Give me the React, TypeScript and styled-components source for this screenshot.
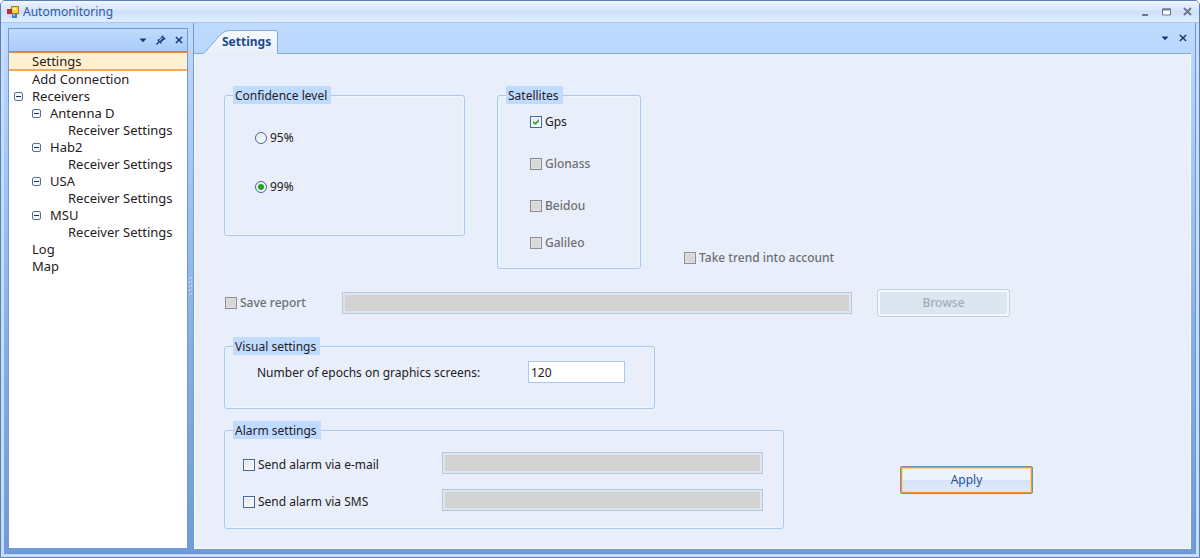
import React, { useState } from "react";
import styled, { createGlobalStyle, css } from "styled-components";

const GlobalStyle = createGlobalStyle`
  *, *::before, *::after { box-sizing: border-box; }
  body { margin: 0; }
  button, input { font: inherit; color: inherit; }
`;

const navy = "#1e4a8f";
const ink = "#1f2022";
const surface = "#e8effa";
const line = "#a9c8f0";

const Window = styled.div`
  display: flex;
  flex-direction: column;
  min-height: 100vh;
  border: 1px solid #5a7fb4;
  border-radius: 5px 5px 0 0;
  background: #c6ddfb;
  color: ${ink};
  font: 12px/18px "Noto Sans", "Open Sans", sans-serif;
`;

const TitleBar = styled.header`
  display: flex;
  align-items: center;
  height: 22px;
  padding: 0 6px;
  gap: 4px;
  border-bottom: 1px solid #aac8f2;
  border-radius: 4px 4px 0 0;
  background: linear-gradient(#f4f9ff 0, #e3edfd 3px, #dbe7fc 9px, #cddffb 10px, #dfecff 20px);
`;

const Title = styled.h1`
  flex: 1;
  margin: 0;
  color: #2d5aa6;
  font-size: 12px;
  font-weight: 400;
`;

const Tools = styled.div<{ $gap?: number }>`
  display: flex;
  align-items: center;
  gap: ${(p) => p.$gap ?? 6}px;
`;

const ToolButton = styled.button<{ $tone?: string }>`
  display: grid;
  place-items: center;
  width: 12px;
  height: 16px;
  padding: 0;
  border: 0;
  background: none;
  color: ${(p) => p.$tone ?? "#16367c"};
`;

const Workspace = styled.div`
  flex: 1;
  display: flex;
  margin: 0 3px 3px;
  padding: 0 4px 4px;
  border: solid #6b95d2;
  border-width: 0 1px 1px 0;
  background: linear-gradient(#bfdbff, #a6c8f6 25%, #87aee6 60%, #6f9bd6);
`;

const SidePanel = styled.aside`
  display: flex;
  flex-direction: column;
  flex: 0 0 180px;
  margin-top: 5px;
  border: 1px solid #6f9ad6;
  background: #fff;
`;

const PanelHeader = styled.div`
  display: flex;
  justify-content: flex-end;
  height: 23px;
  padding: 0 2px;
  border-bottom: 1px solid #6f9ad6;
  background: linear-gradient(#c0daff, #aaccf7);
`;

const TreeList = styled.ul<{ $nested?: boolean }>`
  margin: 0;
  padding: 0 0 0 ${(p) => (p.$nested ? 18 : 0)}px;
  list-style: none;
`;

const TreeRow = styled.div<{ $selected?: boolean }>`
  display: flex;
  align-items: center;
  height: 17px;
  padding-left: 5px;
  gap: 9px;
  ${(p) =>
    p.$selected &&
    css`
      height: 19px;
      border-top: 1px solid #e58a3a;
      border-bottom: 2px solid #f9a95a;
      background: #fff0d2;
    `}
`;

const TreeLabel = styled.button<{ $leaf?: boolean }>`
  padding: 0;
  margin-left: ${(p) => (p.$leaf ? 18 : 0)}px;
  border: 0;
  background: none;
  font-size: 13px;
  line-height: 17px;
  text-align: left;
`;

const Expander = styled.button`
  position: relative;
  width: 9px;
  height: 9px;
  padding: 0;
  border: 1px solid #5b6f93;
  border-radius: 2px;
  background: #f6f9fe;
  &::after {
    content: "";
    position: absolute;
    inset: 3px 1px auto;
    height: 1px;
    background: #1b2d55;
  }
`;

const Splitter = styled.div`
  display: flex;
  align-items: center;
  justify-content: center;
  width: 6px;
  border-right: 1px solid #6f9ad6;
`;

const MainPanel = styled.main`
  flex: 1;
  min-width: 0;
  display: flex;
  flex-direction: column;
`;

const TabStrip = styled.div`
  display: flex;
  justify-content: space-between;
  align-items: center;
  height: 31px;
  padding: 0 2px 0 9px;
  border-bottom: 1px solid #7fa9e0;
`;

const Tab = styled.button`
  position: relative;
  align-self: flex-end;
  width: 76px;
  height: 24px;
  margin-bottom: -1px;
  padding: 0 7px 0 19px;
  border: 0;
  background: none;
  color: ${navy};
  font-size: 12px;
  font-weight: 700;
  line-height: 24px;
  text-align: left;
`;

const TabShape = styled.svg`
  position: absolute;
  inset: 0;
`;

const TabText = styled.span`
  position: relative;
`;

const Page = styled.form`
  flex: 1;
  display: flex;
  flex-direction: column;
  gap: 20px;
  padding: 32px 29px 19px;
  border: solid #f7faff;
  border-width: 0 1px 1px;
  background: ${surface};
`;

const Row = styled.div<{ $align?: string; $gap?: number }>`
  display: flex;
  align-items: ${(p) => p.$align ?? "center"};
  gap: ${(p) => p.$gap ?? 0}px;
`;

const Stack = styled.div<{ $gap: number }>`
  display: flex;
  flex-direction: column;
  gap: ${(p) => p.$gap}px;
`;

const Group = styled.fieldset<{ $width: number }>`
  flex: none;
  width: ${(p) => p.$width}px;
  min-width: 0;
  margin: 0;
  padding: 0 0 0 8px;
  border: 1px solid ${line};
  border-radius: 3px;
  box-shadow: inset 0 0 0 1px #eff5fd;
`;

const Legend = styled.legend`
  height: 18px;
  padding: 0 4px 0 2px;
  background: #bfdbff;
  line-height: 19px;
`;

const RadioList = styled.div`
  display: flex;
  flex-direction: column;
  gap: 31px;
  padding: 25px 22px 39px;
`;

const SatelliteList = styled.div`
  display: grid;
  grid-template-rows: 42px 42px 37px 18px;
  align-items: start;
  padding: 9px 24px 16px;
`;

const Option = styled.label<{ $disabled?: boolean }>`
  display: flex;
  align-items: center;
  gap: 3px;
  height: 18px;
  white-space: nowrap;
  ${(p) =>
    p.$disabled &&
    css`
      color: #6e7073;
      font-weight: 500;
    `}
`;

const Box = styled.input`
  appearance: none;
  position: relative;
  flex: none;
  width: 12px;
  height: 12px;
  margin: 0;
  border: 1px solid #40699c;
  background: linear-gradient(135deg, #dfe3ea, #fbfcfe);
  box-shadow: inset 0 0 0 1px #f6f8fb;
  &[type="radio"] {
    border-radius: 50%;
  }
  &[type="radio"]:checked::after {
    content: "";
    position: absolute;
    inset: 2px;
    border-radius: 50%;
    background: #1fa51f;
  }
  &[type="checkbox"]:checked::after {
    content: "";
    position: absolute;
    inset: 2px;
    background: #2ba32b;
    clip-path: polygon(0 35%, 38% 62%, 100% 0, 100% 38%, 42% 100%, 0 68%);
  }
  &:disabled {
    border-color: #8d8d8d;
    background: #d8d8d8;
    box-shadow: inset 0 0 0 1px #e0e0e0;
  }
`;

const TrendSlot = styled.div`
  padding: 0 0 2px 43px;
`;

const SaveLabel = styled.div`
  flex: 0 0 118px;
  padding-left: 1px;
`;

const TextField = styled.input<{ $width: number }>`
  flex: 0 1 ${(p) => p.$width}px;
  min-width: 0;
  width: ${(p) => p.$width}px;
  height: 22px;
  padding: 0 2px;
  border: 1px solid ${line};
  border-radius: 0;
  background: #fff;
  &:disabled {
    border-color: #b9c8d8;
    background: #d3d3d3;
    box-shadow: inset 0 0 0 2px #dce6f1;
  }
`;

const BrowseButton = styled.button`
  width: 133px;
  height: 28px;
  margin-left: 25px;
  border: 1px solid #c2cfdc;
  border-radius: 3px;
  background: #dce6f0;
  box-shadow: inset 0 0 0 2px #f3f8fd;
  color: #a2adb9;
  font-weight: 500;
`;

const ApplyButton = styled.button`
  width: 133px;
  height: 28px;
  margin: 10px 0 0 116px;
  border: 1px solid #7c91b0;
  border-radius: 2px;
  background: linear-gradient(#eef4fd 0 13px, #d3e2f6 13px, #e3edfb);
  box-shadow: inset 0 0 0 1px #eb962f, inset 0 0 0 2px #fdd9a2;
  color: #27509a;
`;

const EpochRow = styled.div`
  display: flex;
  align-items: center;
  padding: 6px 29px 25px 24px;
`;

const EpochLabel = styled.label`
  flex: 0 0 271px;
  padding-top: 2px;
`;

const AlarmRows = styled.div`
  display: flex;
  flex-direction: column;
  gap: 15px;
  padding: 13px 20px 17px 10px;
`;

const AlarmOption = styled.div`
  flex: 0 0 199px;
  padding-top: 3px;
`;

const Dropdown = () => (
  <svg width="8" height="5" viewBox="0 0 8 5" aria-hidden="true">
    <path d="M.5 .5h7L4 4.200z" fill="currentColor" />
  </svg>
);

const Cross = ({ size = 9, weight = 1.6 }: { size?: number; weight?: number }) => (
  <svg width={size} height={size} viewBox="0 0 9 9" aria-hidden="true">
    <path d="M1 1l7 7M8 1L1 8" stroke="currentColor" strokeWidth={weight} />
  </svg>
);

const Pin = () => (
  <svg width="10" height="10" viewBox="0 0 10 10" fill="none" stroke="currentColor" aria-hidden="true">
    <path d="M.5 9.500L3.200 6.800" strokeWidth="1.300" />
    <path d="M1.600 4.600l3.800 3.800" strokeWidth="1.300" />
    <path d="M5.700 .8l3.500 3.500" strokeWidth="1.300" />
    <path d="M2.800 5.200L6.200 1.600M5 7.200L8.500 3.700" />
    <path d="M4.400 6.400L7.600 3.200" strokeWidth="1.400" />
  </svg>
);

const AppIcon = () => (
  <svg width="12" height="12" viewBox="0 0 12 12" aria-hidden="true">
    <rect x="4.5" y=".5" width="7" height="7" fill="#fcd33b" stroke="#a67c18" />
    <rect x="6" y="2" width="3" height="2" fill="#fff3b4" />
    <rect x=".5" y="3.5" width="4" height="4" fill="#d2281c" stroke="#a23a35" />
    <rect x="1" y="8.5" width="3" height="2" fill="#e6e9f0" stroke="#c1c9d9" strokeWidth=".6" />
    <rect x="5" y="8" width="5" height="4" fill="#3f79dc" />
    <rect x="6" y="8" width="2" height="2" fill="#8fb8f6" />
  </svg>
);

const Grip = () => (
  <svg width="4" height="18" viewBox="0 0 4 18" aria-hidden="true">
    {[0, 4, 8, 12, 16].map((y) => (
      <g key={y}>
        <rect x="2" y={y} width="1" height="1" fill="#e4f0ff" />
        <rect x="0" y={y + 1} width="1" height="1" fill="#d0e3fc" />
      </g>
    ))}
  </svg>
);

const receivers = ["Antenna D", "Hab2", "USA", "MSU"];
const satellites = ["Gps", "Glonass", "Beidou", "Galileo"];

function Leaf({ text, selected }: { text: string; selected?: boolean }) {
  return (
    <TreeRow $selected={selected}>
      <TreeLabel type="button" $leaf>{text}</TreeLabel>
    </TreeRow>
  );
}

function Branch({ text, children }: { text: string; children: React.ReactNode }) {
  const [open, setOpen] = useState(true);
  return (
    <li>
      <TreeRow>
        <Expander type="button" aria-label={`Toggle ${text}`} aria-expanded={open} onClick={() => setOpen(!open)} />
        <TreeLabel type="button">{text}</TreeLabel>
      </TreeRow>
      {open && <TreeList $nested>{children}</TreeList>}
    </li>
  );
}

export default function App() {
  return (
    <>
      <GlobalStyle />
      <Window>
        <TitleBar>
          <AppIcon />
          <Title>Automonitoring</Title>
          <Tools $gap={9}>
            <ToolButton type="button" aria-label="Minimize" $tone="#6c7890">
              <svg width="8" height="10" viewBox="0 0 8 10"><path d="M1 8h6" stroke="currentColor" strokeWidth="2" /></svg>
            </ToolButton>
            <ToolButton type="button" aria-label="Maximize" $tone="#6c7890">
              <svg width="9" height="8" viewBox="0 0 9 8">
                <path d="M.5 1h8v6h-8z" fill="#fff" stroke="currentColor" />
                <path d="M0 1.500h9" stroke="currentColor" strokeWidth="2" />
              </svg>
            </ToolButton>
            <ToolButton type="button" aria-label="Close" $tone="#6c7890"><Cross weight={2} /></ToolButton>
          </Tools>
        </TitleBar>
        <Workspace>
          <SidePanel>
            <PanelHeader>
              <Tools>
                <ToolButton type="button" aria-label="Panel menu"><Dropdown /></ToolButton>
                <ToolButton type="button" aria-label="Pin panel"><Pin /></ToolButton>
                <ToolButton type="button" aria-label="Close panel"><Cross size={8} /></ToolButton>
              </Tools>
            </PanelHeader>
            <TreeList>
              <li><Leaf text="Settings" selected /></li>
              <li><Leaf text="Add Connection" /></li>
              <Branch text="Receivers">
                {receivers.map((name) => (
                  <Branch key={name} text={name}>
                    <li><Leaf text="Receiver Settings" /></li>
                  </Branch>
                ))}
              </Branch>
              <li><Leaf text="Log" /></li>
              <li><Leaf text="Map" /></li>
            </TreeList>
          </SidePanel>
          <Splitter><Grip /></Splitter>
          <MainPanel>
            <TabStrip>
              <Tab type="button">
                <TabShape width="76" height="24" viewBox="0 0 76 24" aria-hidden="true">
                  <defs>
                    <linearGradient id="tab" x1="0" y1="0" x2="0" y2="1">
                      <stop offset="0" stopColor="#f7faff" />
                      <stop offset="1" stopColor={surface} />
                    </linearGradient>
                  </defs>
                  <path d="M0 23.500L3 21L18 4Q22 .5 26 .5H72Q74.500 .5 74.500 3V24H0z" fill="url(#tab)" />
                  <path d="M0 23.500L3 21L18 4Q22 .5 26 .5H72Q74.500 .5 74.500 3V24" fill="none" stroke="#7fa9e0" />
                </TabShape>
                <TabText>Settings</TabText>
              </Tab>
              <Tools>
                <ToolButton type="button" aria-label="Tab list"><Dropdown /></ToolButton>
                <ToolButton type="button" aria-label="Close tab"><Cross size={8} /></ToolButton>
              </Tools>
            </TabStrip>
            <Page onSubmit={(e) => e.preventDefault()}>
              <Row $align="flex-end">
                <Row $align="flex-start" $gap={32}>
                  <Group $width={241}>
                    <Legend>Confidence level</Legend>
                    <RadioList>
                      <Option><Box type="radio" name="level" />95%</Option>
                      <Option><Box type="radio" name="level" defaultChecked />99%</Option>
                    </RadioList>
                  </Group>
                  <Group $width={144}>
                    <Legend>Satellites</Legend>
                    <SatelliteList>
                      {satellites.map((name, i) => (
                        <Option key={name} $disabled={i > 0}>
                          <Box type="checkbox" defaultChecked={i === 0} disabled={i > 0} />
                          {name}
                        </Option>
                      ))}
                    </SatelliteList>
                  </Group>
                </Row>
                <TrendSlot>
                  <Option $disabled><Box type="checkbox" disabled />Take trend into account</Option>
                </TrendSlot>
              </Row>
              <Row>
                <SaveLabel>
                  <Option $disabled><Box type="checkbox" disabled />Save report</Option>
                </SaveLabel>
                <TextField $width={510} type="text" aria-label="Report path" disabled />
                <BrowseButton type="button" disabled>Browse</BrowseButton>
              </Row>
              <Stack $gap={12}>
                <Group $width={431}>
                  <Legend>Visual settings</Legend>
                  <EpochRow>
                    <EpochLabel htmlFor="epochs">Number of epochs on graphics screens:</EpochLabel>
                    <TextField id="epochs" $width={98} type="text" defaultValue="120" />
                  </EpochRow>
                </Group>
                <Row>
                  <Group $width={560}>
                    <Legend>Alarm settings</Legend>
                    <AlarmRows>
                      <Row>
                        <AlarmOption><Option><Box type="checkbox" />Send alarm via e-mail</Option></AlarmOption>
                        <TextField $width={322} type="text" aria-label="E-mail address" disabled />
                      </Row>
                      <Row>
                        <AlarmOption><Option><Box type="checkbox" />Send alarm via SMS</Option></AlarmOption>
                        <TextField $width={322} type="text" aria-label="Phone number" disabled />
                      </Row>
                    </AlarmRows>
                  </Group>
                  <ApplyButton type="submit">Apply</ApplyButton>
                </Row>
              </Stack>
            </Page>
          </MainPanel>
        </Workspace>
      </Window>
    </>
  );
}
